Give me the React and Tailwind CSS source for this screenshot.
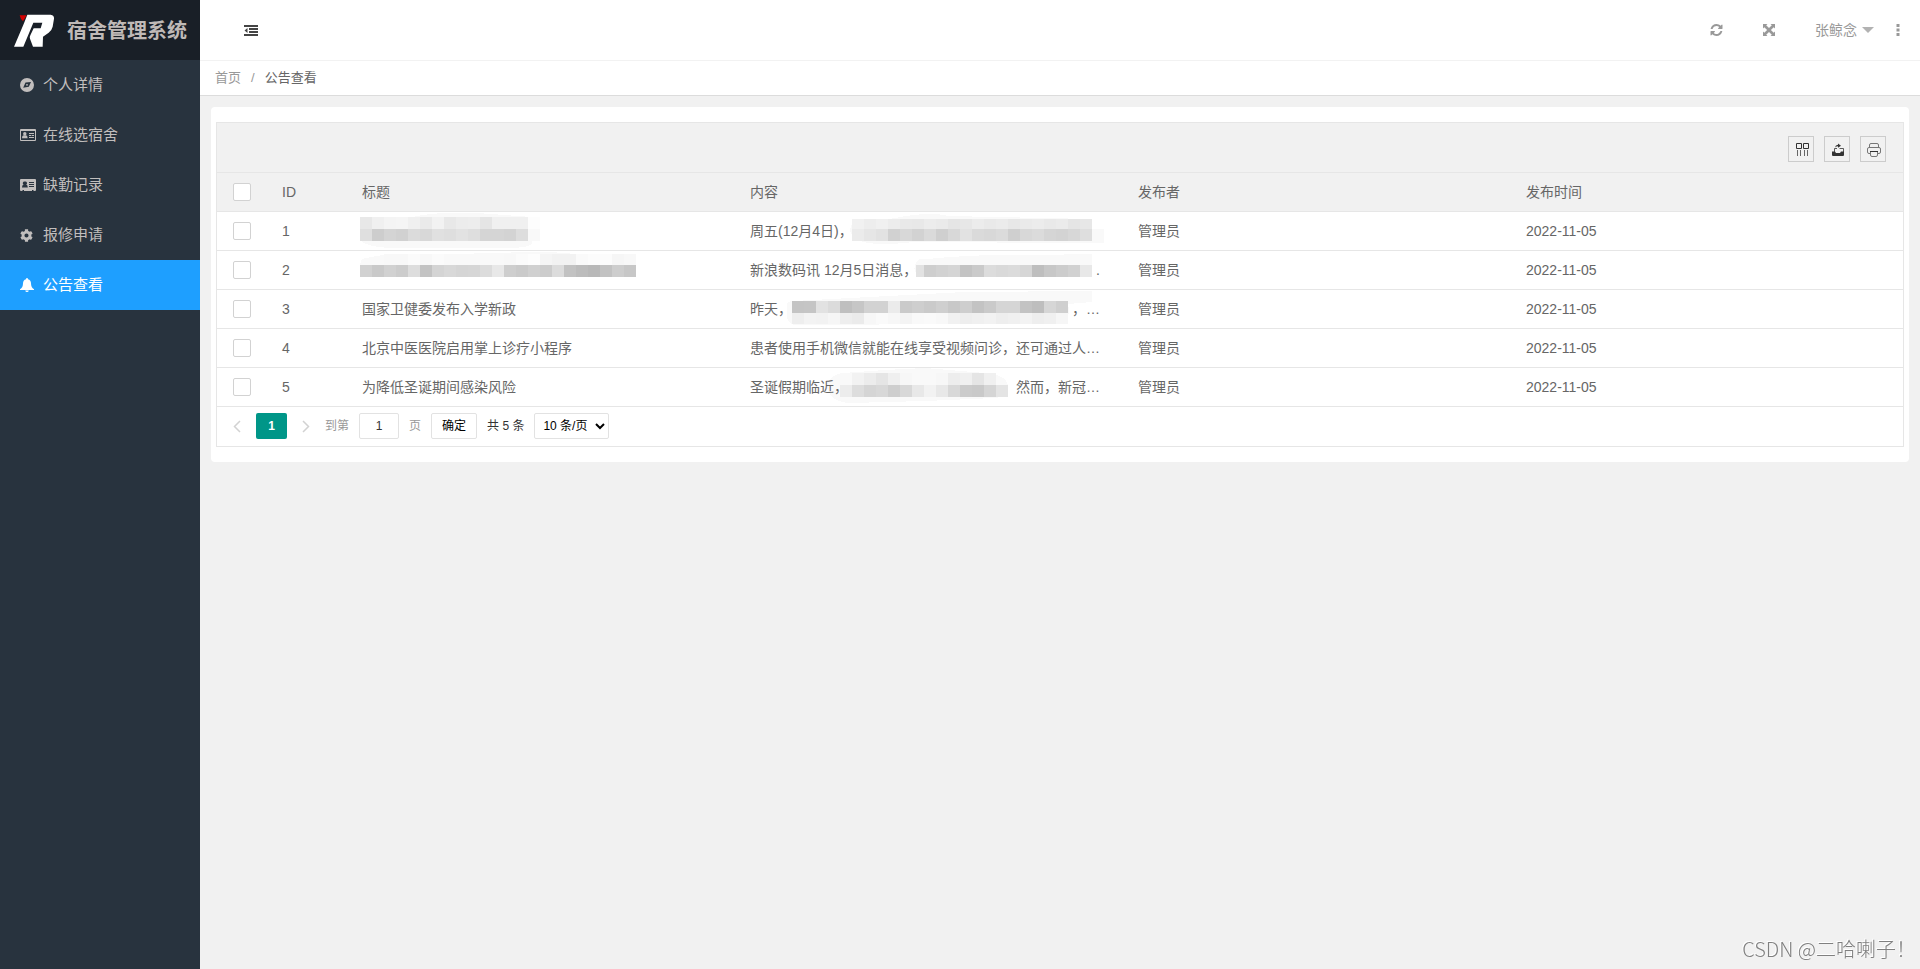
import { useState } from "react";
import { FaCog } from "react-icons/fa";

const Compass = () => (
  <svg width="14" height="14" viewBox="0 0 14 14" fill="currentColor">
    <path
      fillRule="evenodd"
      d="M7 0A7 7 0 0 1 7 14A7 7 0 0 1 7 0ZM5.500 4.500L11 4L8.800 8.800L3.200 9.800Z"
    />
    <circle cx="7" cy="6.8" r="0.9" />
  </svg>
);

const Bell = () => (
  <svg width="14" height="14" viewBox="0 0 14 14" fill="currentColor">
    <path d="M7 0Q8 0 8 1.200Q11 2 11 5.500Q11 9.500 14 11.200V12H0V11.200Q3 9.500 3 5.500Q3 2 6 1.200Q6 0 7 0ZM5.200 12.500H8.800Q8.500 14 7 14Q5.500 14 5.200 12.500Z" />
  </svg>
);

const IdCardOutline = () => (
  <svg width="16" height="12" viewBox="0 0 16 12" fill="currentColor">
    <path
      fillRule="evenodd"
      d="M1 0H15A1 1 0 0 1 16 1V11A1 1 0 0 1 15 12H1A1 1 0 0 1 0 11V1A1 1 0 0 1 1 0ZM1 2V11H15V2Z"
    />
    <circle cx="4.8" cy="4.8" r="1.7" />
    <path d="M2 9.3Q2 6.4 3.6 6.3H6Q7.6 6.4 7.6 9.3ZM9 4H14V5H9ZM9 6H11.4V7H9ZM12 6H14V7H12ZM9 8H14V9H9Z" />
  </svg>
);

const IdCard = () => (
  <svg width="16" height="12" viewBox="0 0 16 12" fill="currentColor">
    <path
      fillRule="evenodd"
      d="M1 0H15A1 1 0 0 1 16 1V11A1 1 0 0 1 15 12H13.5V11H12V12H4V11H2.5V12H1A1 1 0 0 1 0 11V1A1 1 0 0 1 1 0ZM4.9 2.5A1.7 1.7 0 0 0 3.6 5.6Q2 6 2 8.6H7.8Q7.8 6 6.2 5.6A1.7 1.7 0 0 0 4.9 2.5ZM9 3V4H14V3ZM9 5V6H14V5ZM9 7V8H14V7Z"
    />
  </svg>
);

const menu = [
  { name: "个人详情", icon: <Compass /> },
  { name: "在线选宿舍", icon: <IdCardOutline /> },
  { name: "缺勤记录", icon: <IdCard /> },
  { name: "报修申请", icon: <FaCog size={13} /> },
  { name: "公告查看", icon: <Bell /> },
];

// pixelated strips: x, y of the first block and one grey level per 12px block
const mosaics = {
  title1: {
    haze: "M15 8Q35 5 60 6Q90 -1 130 1L185 5V32Q180 36 160 36H50Q22 36 14 29Z",
    strips: [
      { x: 13, y: 5, g: [232, 240, 244, 245, 240, 234, 242, 232, 236, 237, 229, 240, 240, 240, 253] },
      { x: 13, y: 17, g: [223, 205, 212, 209, 219, 216, 224, 222, 226, 222, 213, 213, 211, 221, 249] },
    ],
  },
  title2: {
    haze: "M15 8Q40 2 60 3H96L157 2Q190 -1 229 3L240 6L289 7V14H13Z",
    strips: [
      { x: 37, y: 3, g: [248, 248, 251, 248, 251] },
      { x: 157, y: 3, g: [248, 251, 253, 245, 242, 242, 250, 252, 252, 246, 248] },
      {
        x: 13,
        y: 14,
        g: [209, 201, 209, 204, 221, 195, 212, 216, 213, 214, 220, 232, 206, 202, 208, 204, 220, 194, 188, 184, 194, 205, 199],
      },
    ],
  },
  body1: {
    haze: "M117 12Q120 6 130 8Q150 8 160 6Q195 -1 213 4L357 7V17L369 19V31Q330 32 280 31Q180 28 160 32Q115 34 115 17Z",
    strips: [
      { x: 117, y: 7, g: [241, 237, 240, 236, 233, 232, 236, 234, 229, 231, 236, 233, 235, 231, 234, 236, 233, 235, 229, 231] },
      { x: 117, y: 17, g: [235, 230, 226, 209, 216, 210, 218, 207, 216, 226, 218, 216, 219, 207, 216, 219, 213, 211, 215, 222] },
      { x: 357, y: 17, g: [249] },
    ],
  },
  body2: {
    haze: "M180 14Q182 6 192 8Q240 3 300 4L357 3V26H190Q177 24 180 14Z",
    strips: [
      { x: 181, y: 14, g: [226] },
      { x: 189, y: 14, g: [206, 210, 213, 195, 202, 220, 217, 219, 214, 190, 199, 204, 209, 232] },
    ],
  },
  body3: {
    haze: "M52 18Q50 11 58 11L230 2L357 1V12L333 14Q336 26 329 32L270 34L245 31L130 35H60Q50 34 52 18Z",
    strips: [
      { x: 57, y: 22, g: [238, 243, 242, 246, 238, 235, 247, 250, 247, 244, 249, 250, 248, 241, 238, 240, 242, 238, 240, 243, 238, 240, 246] },
      {
        x: 57,
        y: 11,
        g: [196, 197, 226, 219, 191, 198, 210, 210, 235, 202, 206, 202, 207, 200, 206, 195, 202, 213, 213, 195, 190, 214, 207],
      },
    ],
  },
  body5: {
    haze: "M92 20Q93 7 108 5L150 2L190 0L250 5Q272 7 273 18Q272 29 260 30L190 33L115 35Q96 34 92 20Z",
    strips: [
      { x: 117, y: 5, g: [242, 236, 229, 239, 247, 249, 249, 247, 237, 240, 229, 240] },
      { x: 105, y: 17, g: [236, 221, 213, 216, 206, 216, 232, 242, 232, 216, 203, 201, 213, 228] },
    ],
  },
};

const Mosaic = ({ name }) => {
  const m = mosaics[name];
  return (
    <svg
      className="absolute top-0 left-0"
      width="388"
      height="38"
      viewBox="0 0 388 38"
      shapeRendering="crispEdges"
      aria-hidden="true"
    >
      <path d={m.haze} fill="#f9f9f9" />
      {m.strips.map((s) =>
        s.g.map((g, i) => (
          <rect
            key={s.y + "-" + s.x + "-" + i}
            x={s.x + i * 12}
            y={s.y}
            width="12"
            height="12"
            fill={`rgb(${g},${g},${g})`}
          />
        ))
      )}
    </svg>
  );
};

const rows = [
  { id: 1, title: "", titleMosaic: "title1", body: "周五(12月4日)，", bodyMosaic: "body1" },
  { id: 2, title: "", titleMosaic: "title2", body: "新浪数码讯 12月5日消息，", tail: ".", bodyMosaic: "body2" },
  { id: 3, title: "国家卫健委发布入学新政", body: "昨天，", tail: "，…", bodyMosaic: "body3" },
  { id: 4, title: "北京中医医院启用掌上诊疗小程序", body: "患者使用手机微信就能在线享受视频问诊，还可通过人…" },
  { id: 5, title: "为降低圣诞期间感染风险", body: "圣诞假期临近，", tail: "然而，新冠…", bodyMosaic: "body5" },
];

const Logo = () => (
  <svg width="42" height="34" viewBox="0 0 126 102" aria-hidden="true">
    <path d="M17 4H38L27 22Q20 16 17 4Z" fill="#d40000" />
    <path
      fill="#fff"
      d="M40 2H110Q121 3 120 14L116 38Q113 50 104 56L87 68L86 98H57L48 74Q46 69 49 64L59 43H80L85 26H58L28 98H0L30 28Z"
    />
  </svg>
);

const Sidebar = ({ active, setActive }) => (
  <aside className="w-[200px] shrink-0 bg-[#28333e]">
    <div className="flex h-[60px] items-center gap-[11px] bg-[#191f27] pt-px pl-[14px]">
      <Logo />
      <h1 className="text-xl font-bold whitespace-nowrap text-[#bfb9b7]">
        宿舍管理系统
      </h1>
    </div>
    <nav>
      {menu.map((m) => (
        <a
          key={m.name}
          href="#"
          onClick={(e) => {
            e.preventDefault();
            setActive(m.name);
          }}
          className={
            active == m.name
              ? "flex h-[50px] items-center bg-[#1e9fff] pl-5 text-[15px] text-white"
              : "flex h-[50px] items-center pl-5 text-[15px] text-[#c1bebd]"
          }
        >
          <span className="w-[23px]">{m.icon}</span>
          {m.name}
        </a>
      ))}
    </nav>
  </aside>
);

const Header = () => (
  <header className="flex h-[61px] items-center justify-between border-b border-[#f2f2f2] bg-white pr-5 pl-11">
    <button aria-label="收起菜单" className="text-[#444]">
      <svg width="14" height="11" viewBox="0 0 14 11" fill="currentColor">
        <path d="M0 0H14V2H0ZM5 3H14V5H5ZM5 6H14V8H5ZM0 9H14V11H0ZM3.5 3V8L0.5 5.5Z" />
      </svg>
    </button>
    <div className="flex items-center text-[#999]">
      <button aria-label="刷新" className="mr-10">
        <svg width="13" height="12" viewBox="0 0 1536 1536" fill="currentColor">
          <path d="M1511 928q0 5-1 7-64 268-268 434.500T764 1536q-146 0-282.500-55T238 1324l-129 129q-19 19-45 19t-45-19-19-45V960q0-26 19-45t45-19h448q26 0 45 19t19 45-19 45l-137 137q71 66 161 102t187 36q134 0 250-65t186-179q11-17 53-117 8-23 30-23h192q13 0 22.500 9.500t9.500 22.500zm25-800v448q0 26-19 45t-45 19h-448q-26 0-45-19t-19-45 19-45l138-138Q969 256 768 256q-134 0-250 65T332 500q-11 17-53 117-8 23-30 23H50q-13 0-22.500-9.500T18 608v-7q65-268 270-434.500T768 0q146 0 284 55.500T1297 212l130-129q19-19 45-19t45 19 19 45z" />
        </svg>
      </button>
      <button aria-label="全屏" className="mr-10">
        <svg width="12" height="12" viewBox="0 0 12 12" fill="currentColor">
          <path d="M0 0H4.500L3.200 1.300L6 4.100L8.800 1.300L7.500 0H12V4.500L10.700 3.200L7.900 6L10.700 8.800L12 7.500V12H7.500L8.800 10.700L6 7.900L3.200 10.700L4.500 12H0V7.500L1.300 8.800L4.100 6L1.300 3.200L0 4.500Z" />
        </svg>
      </button>
      <button className="mr-[22px] flex items-center gap-[5px] text-sm">
        张鲸念
        <svg width="12" height="6" viewBox="0 0 12 6" fill="#b2b2b2">
          <path d="M0 0H12L6 6Z" />
        </svg>
      </button>
      <button aria-label="更多">
        <svg width="4" height="12" viewBox="0 0 4 12" fill="currentColor">
          <path d="M0.500 0H3.500V3H0.500ZM0.500 4.500H3.500V7.500H0.500ZM0.500 9H3.500V12H0.500Z" />
        </svg>
      </button>
    </div>
  </header>
);

const toolButton =
  "flex h-[26px] w-[26px] items-center justify-center border border-[#ccc] pt-0.5 pl-0.5 text-[#333]";

const Toolbar = () => (
  <div className="flex h-[50px] items-start justify-end gap-[10px] border-b border-[#e6e6e6] bg-[#f1f1f1] pt-[13px] pr-[17px]">
    <button aria-label="筛选列" className={toolButton}>
      <svg width="14" height="14" viewBox="0 0 14 14" fill="none" stroke="currentColor">
        <path d="M1.500 0.500H6.500V5.500H1.500ZM8.500 0.500H13.500V5.500H8.500Z" />
        <path d="M2.500 7V13M5.500 7V13M9.500 7V13M12.500 7V13" stroke="#666" />
      </svg>
    </button>
    <button aria-label="导出" className={toolButton}>
      <svg width="14" height="14" viewBox="0 0 14 14" fill="currentColor">
        <path d="M1 8.500H4L5 10H9L10 8.500H13V12Q13 13 12 13H2Q1 13 1 12Z" />
        <path d="M3.500 9V5.500H6M8.500 5.500H12.500V9" fill="none" stroke="currentColor" strokeWidth="0.8" />
        <path d="M4 4.500Q4.500 1.800 7 1.800V0.500L10 2.700L7 4.800V3.200Q5.500 3.200 4 4.500Z" />
      </svg>
    </button>
    <button aria-label="打印" className={toolButton}>
      <svg width="14" height="14" viewBox="0 0 14 14" fill="none" stroke="#777">
        <path d="M2.500 4V2Q2.500 0.500 4 0.500H10Q11.500 0.500 11.500 2V4M3 10.500H2Q0.500 10.500 0.500 9V6Q0.500 4.500 2 4.500H12Q13.500 4.500 13.500 6V9Q13.500 10.500 12 10.500H11" />
        <path d="M3.500 8.500V12Q3.500 13.500 5 13.500H9Q10.500 13.500 10.500 12V8.500" />
        <path d="M3 8.500H11" stroke="#333" />
      </svg>
    </button>
  </div>
);

const Check = ({ label, checked, onChange }) => (
  <input
    type="checkbox"
    aria-label={label}
    checked={checked}
    onChange={onChange}
    className="block h-[18px] w-[18px] appearance-none rounded-xs border border-[#d2d2d2] bg-white checked:border-[#5fb878] checked:bg-[#5fb878]"
  />
);

const NoticeTable = () => {
  const [picked, setPicked] = useState([]);

  const toggle = (id) => {
    setPicked((pre) =>
      pre.includes(id) ? pre.filter((p) => p != id) : [...pre, id]
    );
  };

  return (
    <table className="w-full table-fixed text-left text-sm text-[#666]">
      <colgroup>
        <col className="w-[50px]" />
        <col className="w-[80px]" />
        <col />
        <col />
        <col />
        <col />
        <col className="w-1" />
      </colgroup>
      <thead className="bg-[#f1f1f1]">
        <tr className="h-[38px] border-b border-[#e6e6e6]">
          <th className="pl-4">
            <Check
              label="全选"
              checked={picked.length == rows.length}
              onChange={(e) => {
                setPicked(e.target.checked ? rows.map((r) => r.id) : []);
              }}
            />
          </th>
          <th className="px-[15px] font-normal">ID</th>
          <th className="px-[15px] font-normal">标题</th>
          <th className="px-[15px] font-normal">内容</th>
          <th className="px-[15px] font-normal">发布者</th>
          <th className="px-[15px] font-normal">发布时间</th>
          <th></th>
        </tr>
      </thead>
      <tbody>
        {rows.map((r) => (
          <tr key={r.id} className="h-[39px] border-b border-[#e6e6e6]">
            <td className="pl-4">
              <Check
                label={"选择 " + r.id}
                checked={picked.includes(r.id)}
                onChange={() => toggle(r.id)}
              />
            </td>
            <td className="px-[15px]">{r.id}</td>
            <td className="relative px-[15px]">
              {r.titleMosaic && <Mosaic name={r.titleMosaic} />}
              {r.title}
            </td>
            <td className="relative px-[15px]">
              {r.bodyMosaic && <Mosaic name={r.bodyMosaic} />}
              <div className="relative flex justify-between pr-2 whitespace-nowrap">
                <span>{r.body}</span>
                {r.tail && <span>{r.tail}</span>}
              </div>
            </td>
            <td className="px-[15px]">管理员</td>
            <td className="px-[15px]">2022-11-05</td>
            <td></td>
          </tr>
        ))}
      </tbody>
    </table>
  );
};

const Pager = () => {
  const [page, setPage] = useState("1");

  return (
    <div className="flex h-[39px] items-center pl-4 text-xs text-[#333]">
      <button aria-label="上一页" className="mr-[15px] text-[#d2d2d2]">
        <svg width="8" height="13" viewBox="0 0 8 13" fill="none" stroke="currentColor" strokeWidth="1.5">
          <path d="M7 1L1.500 6.500L7 12" />
        </svg>
      </button>
      <button className="h-[26px] w-[31px] rounded-xs bg-[#009688] font-bold text-white">
        1
      </button>
      <button aria-label="下一页" className="mr-[15px] ml-[15px] text-[#d2d2d2]">
        <svg width="8" height="13" viewBox="0 0 8 13" fill="none" stroke="currentColor" strokeWidth="1.5">
          <path d="M1 1L6.500 6.500L1 12" />
        </svg>
      </button>
      <label htmlFor="page" className="text-[#999]">
        到第
      </label>
      <input
        id="page"
        value={page}
        onChange={(e) => setPage(e.target.value)}
        className="mx-[10px] h-[26px] w-10 rounded-xs border border-[#e2e2e2] text-center"
      />
      <span className="text-[#999]">页</span>
      <button className="mx-[10px] h-[26px] rounded-xs border border-[#e2e2e2] px-[10px] text-black">
        确定
      </button>
      <span>共 5 条</span>
      <select
        aria-label="每页条数"
        className="ml-[10px] h-[26px] rounded-xs border border-[#e2e2e2] px-1 text-black"
      >
        <option>10 条/页</option>
        <option>20 条/页</option>
        <option>50 条/页</option>
      </select>
    </div>
  );
};

const App = () => {
  const [active, setActive] = useState("公告查看");

  return (
    <div className="flex min-h-screen bg-[#f1f1f1] font-['Liberation_Sans','Noto_Sans_CJK_SC',sans-serif]">
      <Sidebar active={active} setActive={setActive} />
      <div className="min-w-0 flex-1">
        <Header />
        <div className="flex h-[35px] items-center gap-[10px] border-b border-[#dcdcdc] bg-white pl-[15px] text-[13px] text-[#999]">
          <a href="#">首页</a>
          <span>/</span>
          <span className="text-[#666]">{active}</span>
        </div>
        <main className="mx-[11px] mt-[11px] rounded bg-white px-[5px] py-[15px]">
          <div className="border border-[#e6e6e6]">
            <Toolbar />
            <NoticeTable />
            <Pager />
          </div>
        </main>
      </div>
      <div className="fixed right-1 bottom-1.5 font-['Noto_Sans_CJK_SC',sans-serif] text-xl font-light text-[#808080] [text-shadow:-1px_-1px_0_#fff]">
        CSDN @二哈喇子！
      </div>
    </div>
  );
};

export default App;
